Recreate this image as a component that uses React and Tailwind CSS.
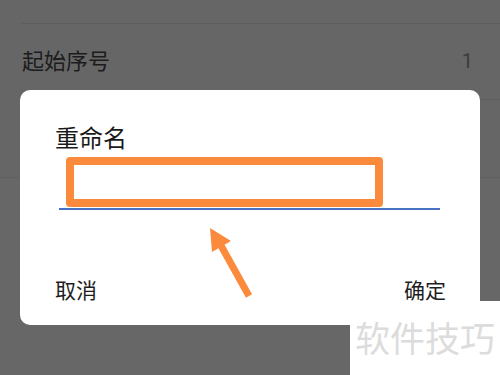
import React from "react";

export default function App() {
  const cjk = { fontFamily: '"Noto Sans CJK SC", "Noto Sans", sans-serif' };
  return (
    <div className="relative w-[500px] h-[375px] overflow-hidden bg-[#666666]" style={cjk}>
      {/* background list */}
      <div className="flex flex-col">
        <div className="h-[23px]" />
        <div className="ml-[22px] h-[1px] bg-[#5c5c5c]" />
        <div className="flex items-center justify-between h-[75px] pl-[22px] pr-[27px]">
          <span className="text-[22px] leading-[22px] text-[#1c1c1c] -mt-[6px]">起始序号</span>
          <span className="text-[20px] leading-[20px] text-[#3c3c3c] -mt-[2px]" style={{ fontFamily: 'Roboto, "Noto Sans", sans-serif' }}>1</span>
        </div>
        <div className="ml-[22px] h-[1px] bg-[#5c5c5c]" />
        <div className="h-[77px]" />
        <div className="h-[1px] bg-[#5f5f5f]" />
        <div className="h-[200px] bg-[#676767]" />
      </div>

      {/* dialog */}
      <div className="absolute left-[20px] top-[90px] w-[460px] h-[235px] rounded-[10px] bg-white flex flex-col">
        <div className="mt-[35px] ml-[35px] text-[24px] leading-[24px] text-[#1a1a1a]">重命名</div>
        <div className="mt-[59px] ml-[39px] w-[381px] h-[2px] bg-[#4a72c4]" />
        <div className="mt-[69px] flex justify-between pl-[35px] pr-[34px]">
          <span className="text-[21px] leading-[21px] text-[#1e1e1e]">取消</span>
          <span className="text-[21px] leading-[21px] text-[#1e1e1e]">确定</span>
        </div>

        {/* annotation rectangle */}
        <div className="absolute left-[46px] top-[67px] w-[317px] h-[50px] border-[8px] border-[#fb8a3c] rounded-[4px]" />

        {/* annotation arrow */}
        <svg className="absolute left-[170px] top-[125px]" width="70" height="90" viewBox="0 0 70 90">
          <line x1="29" y1="27" x2="59" y2="81" stroke="#fb8a3c" strokeWidth="7" />
          <polygon points="20,13 41,26 22,37" fill="#fb8a3c" />
        </svg>
      </div>

      {/* watermark */}
      <div className="absolute right-0 bottom-0 w-[150px] h-[74px] bg-white pl-[5px] pt-[18px]">
        <span className="text-[35px] leading-[35px] text-[#dcdcdc] whitespace-nowrap">软件技巧</span>
      </div>
    </div>
  );
}
